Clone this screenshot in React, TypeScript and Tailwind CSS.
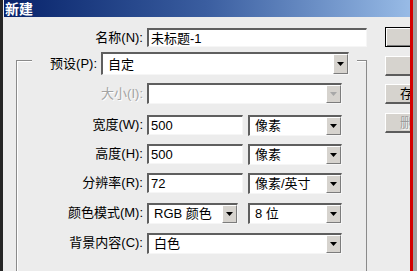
import React from 'react';

const font = "font-['Liberation_Sans','Noto_Sans_CJK_SC',sans-serif]";

const sunken =
    'bg-white border-t-2 border-l-2 border-b border-r border-t-[#5f5f5f] border-l-[#5f5f5f] border-b-[#f6f6f6] border-r-[#f6f6f6]';

const Arrow = ({ disabled }: { disabled?: boolean }) => (
    <div className="w-[15px] h-full shrink-0 flex items-center justify-center bg-[#d6d3ce] border-t border-l border-b border-r border-t-white border-l-white border-b-[#7c7c7c] border-r-[#7c7c7c]">
        <svg width="7" height="4" viewBox="0 0 7 4">
            <path d="M0 0h7L3.5 4z" fill={disabled ? '#a8a8a8' : '#000'} />
        </svg>
    </div>
);

const Select = ({ text, className, disabled }: { text: string; className: string; disabled?: boolean }) => (
    <div className={'flex items-center justify-between ' + sunken + ' ' + (disabled ? 'bg-[#ececec] ' : '') + className}>
        <span className="pl-[5px] leading-none whitespace-nowrap">{text}</span>
        <Arrow disabled={disabled} />
    </div>
);

const Input = ({ text, className }: { text: string; className: string }) => (
    <div className={'flex items-center ' + sunken + ' ' + className}>
        <span className="pl-[2px] leading-none whitespace-nowrap">{text}</span>
    </div>
);

const Label = ({ text, gray, w = 'w-[130px]' }: { text: string; gray?: boolean; w?: string }) => (
    <div className={w + ' shrink-0 text-right pr-[4px] whitespace-nowrap ' + (gray ? 'text-[#a3a3a3] [text-shadow:1px_1px_0_#fff]' : 'text-black')}>
        {text}
    </div>
);

const Button = ({ text, def, disabled, className }: { text: string; def?: boolean; disabled?: boolean; className: string }) => (
    <div
        className={
            'w-[90px] h-[20px] flex items-center bg-[#d6d3ce] ' +
            (def
                ? 'border border-black shadow-[inset_1px_1px_0_#fff,inset_-1px_-1px_0_#7c7c7c] justify-center '
                : 'border-t border-l border-b-2 border-r-2 border-t-white border-l-white border-b-[#5c5c5c] border-r-[#5c5c5c] pl-[14px] ') +
            (disabled ? 'text-[#9c9c9c] [text-shadow:1px_1px_0_#fff] ' : 'text-black ') +
            className
        }
    >
        <span className="whitespace-nowrap leading-none">{text}</span>
    </div>
);

export default function App() {
    return (
        <div className={'w-[417px] h-[271px] overflow-hidden flex text-[13px] bg-[#ececec] ' + font}>
            <div className="w-[3px] shrink-0 bg-[#262626]" />
            <div className="w-[407px] shrink-0 overflow-hidden flex flex-col pl-[1px]">
                <div className="h-[17px] shrink-0 bg-linear-to-r from-[#08226a] via-[#3b5ea0] to-[#98bbe6] flex items-center pl-[1px]">
                    <span className="text-white font-bold text-[14px] leading-none">新建</span>
                </div>

                <div className="flex flex-1 pl-[12px]">
                    <div className="w-[351px] shrink-0 flex flex-col">
                        <div className="flex items-center mt-[11px] h-[19px]">
                            <Label text="名称(N):" w="w-[131px]" />
                            <Input text="未标题-1" className="w-[221px] h-[19px]" />
                        </div>

                        <div className="mt-[13px] flex-1 border-t border-l border-r border-[#8a8a8a] shadow-[inset_1px_1px_0_#fff] flex flex-col">
                            <div className="-mt-[9px] ml-[15px] w-[325px] h-[23px] bg-[#ececec] flex items-center">
                                <Label text="预设(P):" w="w-[69px]" />
                                <Select text="自定" className="w-[248px] h-[23px]" />
                            </div>

                            <div className="flex items-center mt-[8px] h-[21px]">
                                <Label text="大小(I):" gray />
                                <Select text="" disabled className="w-[195px] h-[21px]" />
                            </div>

                            <div className="flex items-center mt-[11px] h-[20px]">
                                <Label text="宽度(W):" />
                                <Input text="500" className="w-[96px] h-[20px]" />
                                <Select text="像素" className="ml-[5px] w-[94px] h-[21px]" />
                            </div>

                            <div className="flex items-center mt-[9px] h-[20px]">
                                <Label text="高度(H):" />
                                <Input text="500" className="w-[96px] h-[20px]" />
                                <Select text="像素" className="ml-[5px] w-[94px] h-[21px]" />
                            </div>

                            <div className="flex items-center mt-[9px] h-[20px]">
                                <Label text="分辨率(R):" />
                                <Input text="72" className="w-[96px] h-[20px]" />
                                <Select text="像素/英寸" className="ml-[5px] w-[94px] h-[21px]" />
                            </div>

                            <div className="flex items-center mt-[10px] h-[20px]">
                                <Label text="颜色模式(M):" />
                                <Select text="RGB 颜色" className="w-[91px] h-[21px]" />
                                <Select text="8 位" className="ml-[10px] w-[94px] h-[21px]" />
                            </div>

                            <div className="flex items-center mt-[10px] h-[20px]">
                                <Label text="背景内容(C):" />
                                <Select text="白色" className="w-[195px] h-[21px]" />
                            </div>
                        </div>
                    </div>

                    <div className="ml-[18px] flex flex-col">
                        <Button text="确定" def className="mt-[10px]" />
                        <Button text="取消" def={false} className="mt-[9px] justify-center !pl-0" />
                        <Button text="存储预设(S)..." className="mt-[8px]" />
                        <Button text="删除预设(D)..." disabled className="mt-[9px]" />
                    </div>
                </div>
            </div>
            <div className="w-[3px] shrink-0 bg-[#d40000]" />
            <div className="flex-1 bg-[#a2a2a2]" />
        </div>
    );
}
